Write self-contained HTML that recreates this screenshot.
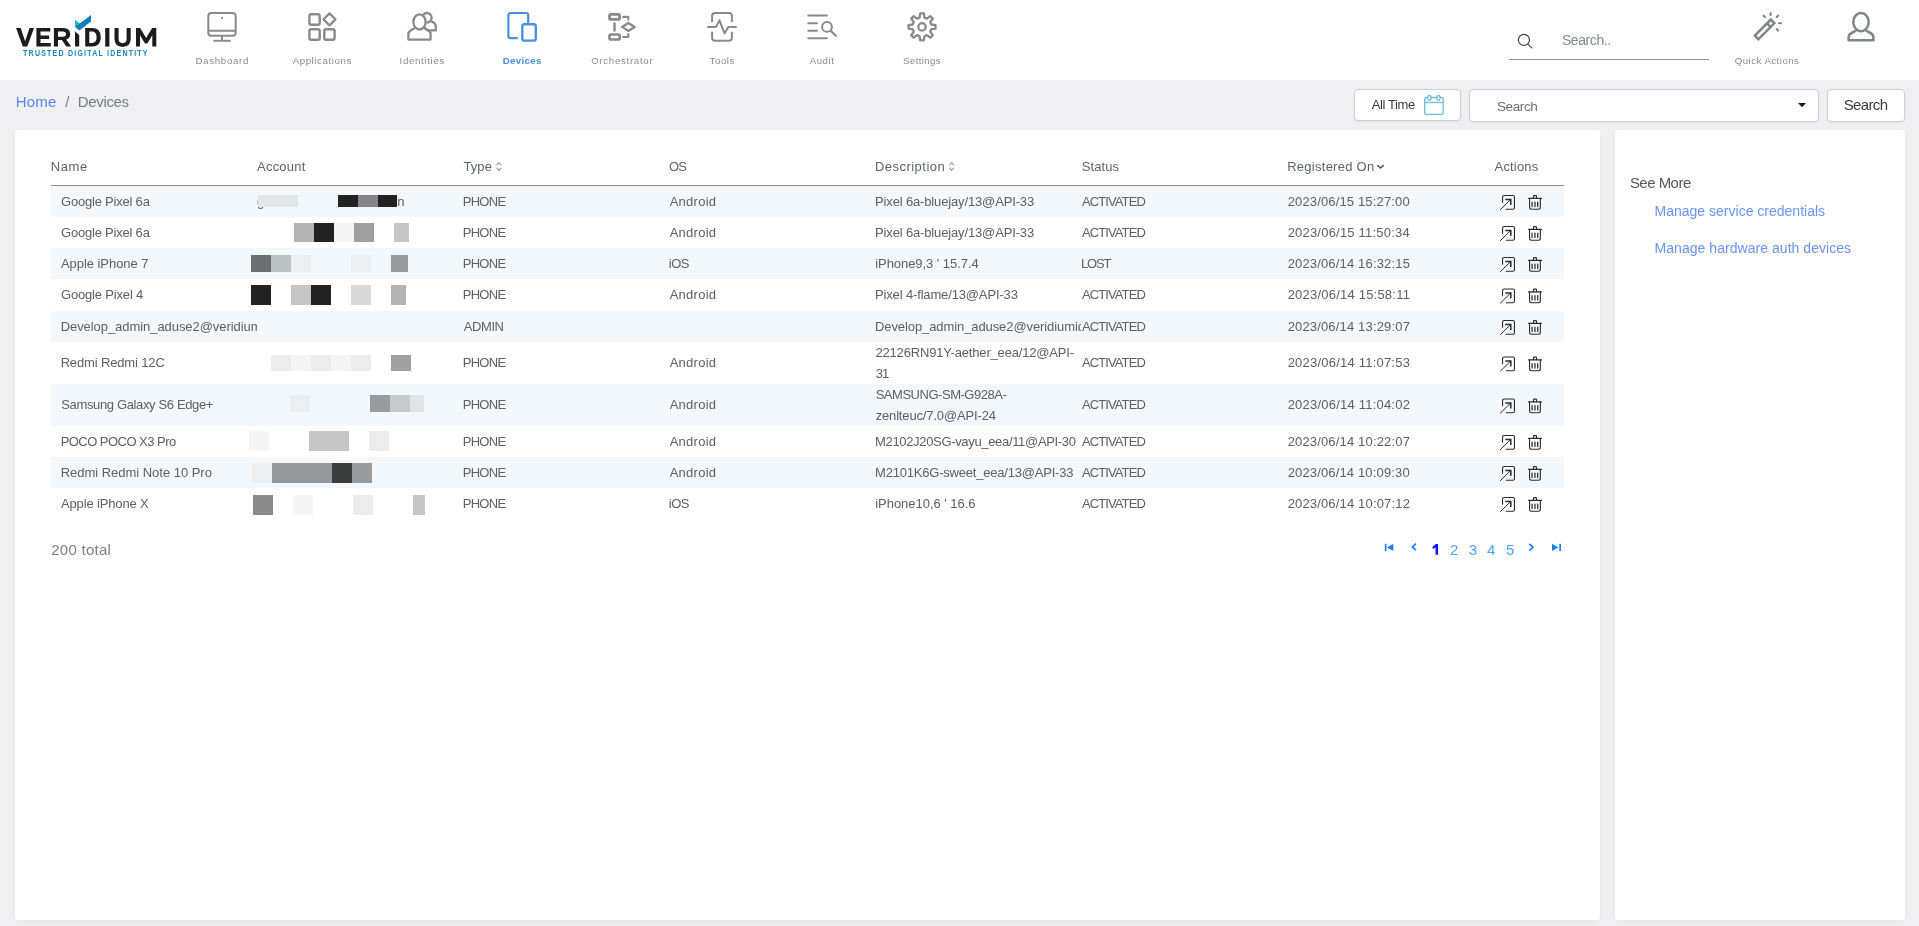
<!DOCTYPE html>
<html lang="en"><head><meta charset="utf-8"><title>Veridium - Devices</title>
<style>
*{box-sizing:border-box}
html,body{margin:0;padding:0}
body{width:1919px;height:926px;overflow:hidden;background:#f0f0f2;font-family:"Liberation Sans", sans-serif;position:relative}
.t{position:absolute;white-space:nowrap;line-height:1;display:block}
.b{position:absolute;display:block;z-index:1}
.a{position:absolute;overflow:visible}
#hdr{display:block;position:absolute;left:0;top:0;width:1919px;height:80px;background:#fff}
.card{display:block;position:absolute;background:#fff;border-radius:3px;box-shadow:0 1px 5px rgba(0,0,0,.05)}
#main{left:15px;top:130px;width:1585px;height:790px}
#side{left:1615px;top:130px;width:290px;height:790px}
.stripe{position:absolute;left:51px;width:1513px;background:#f3f8fd}
#thline{position:absolute;left:51px;top:185px;width:1513px;height:1px;background:#8c8c8c}
.btn{position:absolute;background:#fff;border:1px solid #cfcfd2;border-radius:4px;box-shadow:0 1px 3px rgba(0,0,0,.05)}
#sline{position:absolute;left:1509px;top:58.6px;width:200px;height:1.2px;background:#8a9693}
svg{position:absolute;left:0;top:0}
#ink{position:absolute;left:0;top:0;width:1919px;height:926px;will-change:transform}
</style></head>
<body>
<header id="hdr"></header>
<main class="card" id="main"></main>
<aside class="card" id="side"></aside>
<div class="btn" style="left:1354px;top:89px;width:107px;height:32px"></div>
<div class="btn" style="left:1469px;top:89px;width:350px;height:33px;border-color:#c9d0d8"></div>
<div class="btn" style="left:1827px;top:89px;width:78px;height:33px"></div>
<div id="sline"></div>
<div class="stripe" style="top:186px;height:31px"></div><div class="stripe" style="top:248px;height:31px"></div><div class="stripe" style="top:311px;height:31px"></div><div class="stripe" style="top:384px;height:42px"></div><div class="stripe" style="top:457px;height:31px"></div>
<div id="thline"></div>
<!--ICONS-->
<div id="ink">
<svg id="art" width="1919" height="926" viewBox="0 0 1919 926" style="pointer-events:none">
<defs>
<g id="ext" fill="none" stroke="#2b2b2b" stroke-width="1.1" stroke-linecap="round" stroke-linejoin="round">
<path d="M0.55,7.3 V2.1 Q0.55,0.55 2.1,0.55 H10.9 Q12.45,0.55 12.45,2.1 V12.7 Q12.45,14.25 10.9,14.25 H4.2"/>
<path d="M-1.6,14.6 L8.6,4.6" stroke-width="1"/>
<path d="M3.3,4.45 H8.8 V10" stroke-width="1.5" stroke-linecap="butt" stroke-linejoin="miter"/>
</g>
<g id="trash" fill="none" stroke="#2b2b2b" stroke-width="1.1" stroke-linecap="round" stroke-linejoin="round">
<path d="M0.55,3.4 H13.45"/>
<path d="M5.5,3.2 V1.3 Q5.5,0.65 6.15,0.65 H7.85 Q8.5,0.65 8.5,1.3 V3.2"/>
<path d="M1.55,3.6 V12.3 Q1.55,14.25 3.5,14.25 H10.4 Q12.35,14.25 12.35,12.3 V3.6"/>
<path d="M4.05,7 V11.6 M6.95,7 V11.6 M9.75,7 V11.6" stroke-width="1.25"/>
</g>
</defs>
<use href="#ext" x="1502" y="195.00"/><use href="#trash" x="1528" y="195.00"/><use href="#ext" x="1502" y="226.00"/><use href="#trash" x="1528" y="226.00"/><use href="#ext" x="1502" y="257.00"/><use href="#trash" x="1528" y="257.00"/><use href="#ext" x="1502" y="288.50"/><use href="#trash" x="1528" y="288.50"/><use href="#ext" x="1502" y="320.00"/><use href="#trash" x="1528" y="320.00"/><use href="#ext" x="1502" y="356.50"/><use href="#trash" x="1528" y="356.50"/><use href="#ext" x="1502" y="398.50"/><use href="#trash" x="1528" y="398.50"/><use href="#ext" x="1502" y="435.00"/><use href="#trash" x="1528" y="435.00"/><use href="#ext" x="1502" y="466.00"/><use href="#trash" x="1528" y="466.00"/><use href="#ext" x="1502" y="497.00"/><use href="#trash" x="1528" y="497.00"/>
<!-- logo -->
<g fill="#1c1c1e">
<path d="M16.1,28 H20.7 L25.1,41.3 L29.5,28 H34 L27.3,46.6 H22.8 Z"/>
<path d="M36.4,28 H50.3 V31.6 H40.5 V35.4 H49.1 V38.9 H40.5 V43 H50.7 V46.6 H36.4 Z"/>
<path d="M53.9,28 H63.2 Q70.2,28 70.2,34 Q70.2,38.4 66.2,39.6 L71.2,46.6 H66.3 L61.9,40.1 H58 V46.6 H53.9 Z M58,31.5 V36.7 H62.9 Q66,36.7 66,34.1 Q66,31.5 62.9,31.5 Z" fill-rule="evenodd"/>
<path d="M75,31.6 L79.2,35 V46.6 H75 Z"/>
<path d="M85.2,28 H92 Q100.8,28 100.8,37.3 Q100.8,46.6 92,46.6 H85.2 Z M89.3,31.6 V43 H91.8 Q96.6,43 96.6,37.3 Q96.6,31.6 91.8,31.6 Z" fill-rule="evenodd"/>
<path d="M105.2,28 H109.4 V46.6 H105.2 Z"/>
<path d="M114.5,28 H118.6 V38.6 Q118.6,43.2 122.6,43.2 Q126.6,43.2 126.6,38.6 V28 H130.7 V38.8 Q130.7,46.9 122.6,46.9 Q114.5,46.9 114.5,38.8 Z"/>
<path d="M136,46.6 V28 H140.1 L146.15,38 L152.2,28 H156.3 V46.6 H152.3 V35.3 L147.3,43.4 H145 L140,35.3 V46.6 Z"/>
</g>
<path d="M75,19.6 L80.2,23.8 L75.6,27.2 L75,26.8 Z" fill="#2fb4c8"/>
<path d="M75,26.9 L91,15.1 V21.5 L79.3,30.5 Z" fill="#0b80b9"/>

<text transform="translate(23.1,56) scale(0.84,1)" font-family="Liberation Sans, sans-serif" font-weight="700" font-size="8.4" fill="#1787bd" textLength="148.2" lengthAdjust="spacing">TRUSTED DIGITAL IDENTITY</text>
<!-- nav icons -->
<g fill="none" stroke="#8a8a8a" stroke-width="2" stroke-linecap="round" stroke-linejoin="round">
 <!-- dashboard -->
 <rect x="208.3" y="12.9" width="27.4" height="22.9" rx="3"/>
 <path d="M208.5,30.7 H235.5 M222,36.8 V40 M214.3,40.7 H229.8"/>
 <circle cx="222" cy="18.2" r="0.5" stroke-width="1.2"/>
 <!-- applications -->
 <g stroke-width="2.4">
 <rect x="309.4" y="14.2" width="10.3" height="10.5" rx="1.8"/>
 <rect x="309.4" y="29.2" width="10.3" height="10.5" rx="1.8"/>
 <rect x="324.3" y="29.2" width="10.3" height="10.5" rx="1.8"/>
 <path d="M329.5,13.4 L335.5,19.4 L329.5,25.4 L323.5,19.4 Z" stroke-width="2.2"/>
 </g>
 <!-- identities -->
 <g stroke-width="2.3">
 <path d="M423.9,14.1 A4.75,4.75 0 1 1 427.4,22.5"/>
 <path d="M431.3,21.4 Q435.8,22.8 435.8,27.2 V30.4 H428 Q426.2,29.4 425.3,28.2"/>
 <ellipse cx="419.5" cy="21.9" rx="6.1" ry="7.6"/>
 <path d="M414,28.6 L410.6,30.6 Q408.4,31.9 408.4,34.4 V39.6 H430.6 V34.4 Q430.6,31.9 428.4,30.6 L425,28.6"/>
 </g>
 <!-- orchestrator -->
 <g stroke-width="2.7">
 <rect x="609.5" y="14.3" width="10.1" height="5.1" rx="1.5"/>
 <rect x="609.5" y="34.5" width="10.1" height="5" rx="1.5"/>
 <path d="M614.5,23.4 V30.6" stroke-width="2.5"/>
 <path d="M623.1,16.9 H628.3 V19.7 M628.3,34.1 V37 H623.1" stroke-width="2.1"/>
 <path d="M628.3,23 L634.7,26.9 L628.3,30.9 L622,26.9 Z" stroke-width="2.3"/>
 </g>
 <!-- tools -->
 <path d="M712.1,22 V16 Q712.1,12.9 715.2,12.9 H728.8 Q731.9,12.9 731.9,16 V22 M712.1,31.8 V37.7 Q712.1,40.8 715.2,40.8 H728.8 Q731.9,40.8 731.9,37.7 V31.8" stroke-linecap="butt"/>
 <path d="M708,26.9 H715.8 L719.5,20.4 L724.5,33.4 L728.3,26.9 H736"/>
 <!-- audit -->
 <path d="M808.3,15.6 H826.9 M808.3,23.2 H817 M808.3,30.7 H817 M808.3,38.2 H826.9"/>
 <circle cx="827" cy="26.9" r="4.9"/>
 <path d="M830.7,30.7 L835.8,35.8" stroke-width="2.3"/>
 <!-- settings -->
 <path d="M919.60,17.61 L920.20,13.42 L923.80,13.42 L924.40,17.61 L926.87,18.63 L930.26,16.10 L932.80,18.64 L930.27,22.03 L931.29,24.50 L935.48,25.10 L935.48,28.70 L931.29,29.30 L930.27,31.77 L932.80,35.16 L930.26,37.70 L926.87,35.17 L924.40,36.19 L923.80,40.38 L920.20,40.38 L919.60,36.19 L917.13,35.17 L913.74,37.70 L911.20,35.16 L913.73,31.77 L912.71,29.30 L908.52,28.70 L908.52,25.10 L912.71,24.50 L913.73,22.03 L911.20,18.64 L913.74,16.10 L917.13,18.63 Z" stroke-width="2.3"/>
 <circle cx="922" cy="26.9" r="3.7" stroke-width="2.3"/>
</g>
<!-- devices (active) -->
<g fill="none" stroke="#4a90e2" stroke-width="2.2" stroke-linecap="round" stroke-linejoin="round">
 <path d="M516.8,38.2 H510.6 Q508.4,38.2 508.4,36 V15.2 Q508.4,13 510.6,13 H526 Q528.2,13 528.2,15.2 V23.4"/>
 <rect x="522.3" y="24.2" width="13.5" height="16.4" rx="2.2" stroke-width="2.4"/>
</g>
<!-- header search icon -->
<g fill="none" stroke="#484848" stroke-width="1.2" stroke-linecap="round">
 <circle cx="1523.9" cy="39.9" r="5.55"/>
 <path d="M1527.9,44.1 L1531.7,47.9"/>
</g>
<!-- quick actions wand -->
<g fill="none" stroke="#7f8589" stroke-width="2.5">
 <g transform="translate(1764.6,29.4) rotate(-45)">
  <rect x="-11.3" y="-2.5" width="22.6" height="5"/>
  <path d="M6,-2.5 V2.5"/>
 </g>
 <g stroke-linecap="round" stroke-width="2.1">
 <path d="M1770.6,13 V15"/>
 <path d="M1763.6,15.7 L1765,17.1"/>
 <path d="M1776.7,17.1 L1778.1,15.7"/>
 <path d="M1779,23.2 H1781"/>
 <path d="M1776.7,29.1 L1778.1,30.5"/>
 </g>
</g>
<!-- user -->
<g fill="none" stroke="#7f8589" stroke-width="2.5" stroke-linejoin="round" stroke-linecap="round">
 <ellipse cx="1861" cy="22.1" rx="7.7" ry="9.1"/>
 <path d="M1855.4,30.8 L1851,33.4 Q1848.6,34.9 1848.6,37.6 V40.2 H1873.4 V37.6 Q1873.4,34.9 1871,33.4 L1866.6,30.8"/>
</g>
<!-- calendar -->
<g fill="none" stroke="#6fbbdb" stroke-width="1.3" stroke-linejoin="round">
 <rect x="1424.7" y="97.5" width="18.5" height="16.8" rx="1.3"/>
 <path d="M1424.7,102.5 H1443.2"/>
 <rect x="1427.9" y="95.5" width="3" height="4.8" rx="1.5" fill="#fff"/>
 <rect x="1437" y="95.5" width="3" height="4.8" rx="1.5" fill="#fff"/>
</g>
<!-- select caret -->
<path d="M1798,103 H1806 L1802,107.2 Z" fill="#1e1e1e"/>
<!-- sort icons -->
<g fill="none" stroke="#9c9c9c" stroke-width="1.15" stroke-linecap="round" stroke-linejoin="round">
 <path d="M496.9,164.9 L498.9,162.7 L500.9,164.9 M496.9,168.2 L498.9,170.4 L500.9,168.2"/>
 <path d="M949.6,164.9 L951.6,162.7 L953.6,164.9 M949.6,168.2 L951.6,170.4 L953.6,168.2"/>
</g>
<path d="M1377.8,165.6 L1380.5,168 L1383.2,165.6" fill="none" stroke="#505050" stroke-width="1.5" stroke-linecap="round" stroke-linejoin="round"/>
<!-- pagination icons -->
<path d="M1435.8,544 H1438.1 V554.7 H1435.5 V547.2 L1433.5,548.9 L1432.3,547.3 Z" fill="#1b12f0"/>
<g fill="#1a7dff" stroke="none">
 <rect x="1384.8" y="543.8" width="1.7" height="7.2"/>
 <path d="M1393.3,543.8 V551 L1387,547.4 Z"/>
 <rect x="1559.3" y="543.8" width="1.7" height="7.2"/>
 <path d="M1552,543.8 V551 L1558.3,547.4 Z"/>
</g>
<g fill="none" stroke="#1a7dff" stroke-width="1.7" stroke-linecap="butt" stroke-linejoin="miter">
 <path d="M1415.9,543.6 L1412.4,546.9 L1415.9,550.2"/>
 <path d="M1529.4,543.9 L1532.9,547.3 L1529.4,550.7"/>
</g>
</svg>
<i class="b" style="left:258px;top:195px;width:40px;height:12px;background:#e2e6e9"></i><i class="b" style="left:338px;top:195px;width:20px;height:12px;background:#222"></i><i class="b" style="left:358px;top:195px;width:20px;height:12px;background:#858587"></i><i class="b" style="left:378px;top:195px;width:19px;height:12px;background:#222"></i><i class="b" style="left:294px;top:223px;width:20px;height:19px;background:#b3b3b3"></i><i class="b" style="left:314px;top:223px;width:20px;height:19px;background:#222"></i><i class="b" style="left:334px;top:223px;width:20px;height:19px;background:#f5f5f5"></i><i class="b" style="left:354px;top:223px;width:20px;height:19px;background:#a0a0a0"></i><i class="b" style="left:394px;top:223px;width:15px;height:19px;background:#c6c6c6"></i><i class="b" style="left:251px;top:255px;width:20px;height:17px;background:#6e6f71"></i><i class="b" style="left:271px;top:255px;width:20px;height:17px;background:#bcc1c4"></i><i class="b" style="left:291px;top:255px;width:20px;height:17px;background:#ebeff2"></i><i class="b" style="left:351px;top:255px;width:20px;height:17px;background:#ebeff2"></i><i class="b" style="left:391px;top:255px;width:17px;height:17px;background:#989c9f"></i><i class="b" style="left:251px;top:285px;width:20px;height:20px;background:#222"></i><i class="b" style="left:291px;top:285px;width:20px;height:20px;background:#c6c6c6"></i><i class="b" style="left:311px;top:285px;width:20px;height:20px;background:#222"></i><i class="b" style="left:351px;top:285px;width:20px;height:20px;background:#d9d9d9"></i><i class="b" style="left:391px;top:285px;width:15px;height:20px;background:#b3b3b3"></i><i class="b" style="left:271px;top:355px;width:20px;height:16px;background:#ececec"></i><i class="b" style="left:291px;top:355px;width:20px;height:16px;background:#f5f5f5"></i><i class="b" style="left:311px;top:355px;width:20px;height:16px;background:#ececec"></i><i class="b" style="left:331px;top:355px;width:20px;height:16px;background:#f5f5f5"></i><i class="b" style="left:351px;top:355px;width:20px;height:16px;background:#ececec"></i><i class="b" style="left:391px;top:355px;width:20px;height:16px;background:#a0a0a0"></i><i class="b" style="left:290px;top:395px;width:20px;height:17px;background:#ebeff2"></i><i class="b" style="left:370px;top:395px;width:20px;height:17px;background:#989c9f"></i><i class="b" style="left:390px;top:395px;width:20px;height:17px;background:#c6cacc"></i><i class="b" style="left:410px;top:395px;width:14px;height:17px;background:#e0e4e7"></i><i class="b" style="left:249px;top:431px;width:20px;height:20px;background:#f5f5f5"></i><i class="b" style="left:309px;top:431px;width:40px;height:20px;background:#c6c6c6"></i><i class="b" style="left:369px;top:431px;width:20px;height:20px;background:#ececec"></i><i class="b" style="left:252px;top:463px;width:20px;height:20px;background:#ebeff2"></i><i class="b" style="left:272px;top:463px;width:60px;height:20px;background:#95999c"></i><i class="b" style="left:332px;top:463px;width:20px;height:20px;background:#3c3d3d"></i><i class="b" style="left:352px;top:463px;width:20px;height:20px;background:#989c9f"></i><i class="b" style="left:253px;top:495px;width:20px;height:20px;background:#8a8a8a"></i><i class="b" style="left:293px;top:495px;width:20px;height:20px;background:#f5f5f5"></i><i class="b" style="left:353px;top:495px;width:20px;height:20px;background:#ececec"></i><i class="b" style="left:413px;top:495px;width:12px;height:20px;background:#c6c6c6"></i>
<span class="t" style="left:195.39px;top:56px;font-size:9.7px;color:#8b8b8b;letter-spacing:0.706px;">Dashboard</span><span class="t" style="left:292.65px;top:56px;font-size:9.7px;color:#8b8b8b;letter-spacing:0.582px;">Applications</span><span class="t" style="left:399.59px;top:56px;font-size:9.7px;color:#8b8b8b;letter-spacing:0.660px;">Identities</span><span class="t" style="left:502.74px;top:56px;font-size:9.7px;color:#4a8fe0;letter-spacing:0.321px;font-weight:700;">Devices</span><span class="t" style="left:591.20px;top:56px;font-size:9.7px;color:#8b8b8b;letter-spacing:0.691px;">Orchestrator</span><span class="t" style="left:709.50px;top:56px;font-size:9.7px;color:#8b8b8b;letter-spacing:0.578px;">Tools</span><span class="t" style="left:809.65px;top:56px;font-size:9.7px;color:#8b8b8b;letter-spacing:0.539px;">Audit</span><span class="t" style="left:903.05px;top:56px;font-size:9.7px;color:#8b8b8b;letter-spacing:0.380px;">Settings</span><span class="t" style="left:1734.70px;top:56px;font-size:9.7px;color:#8b8b8b;letter-spacing:0.463px;">Quick Actions</span><span class="t" style="left:1561.91px;top:33px;font-size:14px;color:#858b8f;letter-spacing:-0.405px;">Search..</span><span class="t" style="left:15.78px;top:94px;font-size:15px;color:#5683fb;letter-spacing:0.156px;">Home</span><span class="t" style="left:65.35px;top:94px;font-size:15px;color:#7a7f86;">/</span><span class="t" style="left:77.78px;top:94px;font-size:15px;color:#767b82;letter-spacing:-0.335px;">Devices</span><span class="t" style="left:1371.65px;top:98px;font-size:13px;color:#3a3a3a;letter-spacing:-0.377px;">All Time</span><span class="t" style="left:1496.93px;top:100px;font-size:13.5px;color:#6b7075;letter-spacing:-0.379px;">Search</span><span class="t" style="left:1843.78px;top:97px;font-size:15px;color:#3c3c3c;letter-spacing:-0.663px;">Search</span><span class="t" style="left:1629.88px;top:175px;font-size:15px;color:#585858;letter-spacing:-0.522px;">See More</span><span class="t" style="left:1654.56px;top:204px;font-size:14px;color:#6896f8;letter-spacing:0.004px;">Manage service credentials</span><span class="t" style="left:1654.56px;top:241px;font-size:14px;color:#6896f8;letter-spacing:0.044px;">Manage hardware auth devices</span><span class="t" style="left:50.83px;top:160px;font-size:13px;color:#606468;letter-spacing:0.555px;">Name</span><span class="t" style="left:257.05px;top:160px;font-size:13px;color:#606468;letter-spacing:0.214px;">Account</span><span class="t" style="left:463.45px;top:160px;font-size:13px;color:#606468;letter-spacing:0.082px;">Type</span><span class="t" style="left:669.04px;top:160px;font-size:13px;color:#606468;letter-spacing:-0.927px;">OS</span><span class="t" style="left:875.03px;top:160px;font-size:13px;color:#606468;letter-spacing:0.462px;">Description</span><span class="t" style="left:1081.64px;top:160px;font-size:13px;color:#606468;letter-spacing:0.112px;">Status</span><span class="t" style="left:1287.23px;top:160px;font-size:13px;color:#606468;letter-spacing:0.260px;">Registered On</span><span class="t" style="left:1494.55px;top:160px;font-size:13px;color:#606468;letter-spacing:0.179px;">Actions</span><span class="t" style="left:61.04px;top:195px;font-size:13px;color:#606060;letter-spacing:-0.211px;">Google Pixel 6a</span><span class="t" style="left:462.63px;top:195px;font-size:13px;color:#606060;letter-spacing:-0.667px;">PHONE</span><span class="t" style="left:669.65px;top:195px;font-size:13px;color:#606060;letter-spacing:0.270px;">Android</span><span class="t" style="left:875.03px;top:195px;font-size:13px;color:#606060;letter-spacing:-0.146px;">Pixel 6a-bluejay/13@API-33</span><span class="t" style="left:1082.05px;top:195px;font-size:13px;color:#606060;letter-spacing:-0.909px;">ACTIVATED</span><span class="t" style="left:1287.64px;top:195px;font-size:13px;color:#606060;letter-spacing:0.153px;">2023/06/15 15:27:00</span><span class="t" style="left:61.04px;top:226px;font-size:13px;color:#606060;letter-spacing:-0.211px;">Google Pixel 6a</span><span class="t" style="left:462.63px;top:226px;font-size:13px;color:#606060;letter-spacing:-0.667px;">PHONE</span><span class="t" style="left:669.65px;top:226px;font-size:13px;color:#606060;letter-spacing:0.270px;">Android</span><span class="t" style="left:875.03px;top:226px;font-size:13px;color:#606060;letter-spacing:-0.146px;">Pixel 6a-bluejay/13@API-33</span><span class="t" style="left:1082.05px;top:226px;font-size:13px;color:#606060;letter-spacing:-0.909px;">ACTIVATED</span><span class="t" style="left:1287.64px;top:226px;font-size:13px;color:#606060;letter-spacing:0.207px;">2023/06/15 11:50:34</span><span class="t" style="left:60.95px;top:257px;font-size:13px;color:#606060;letter-spacing:-0.050px;">Apple iPhone 7</span><span class="t" style="left:462.63px;top:257px;font-size:13px;color:#606060;letter-spacing:-0.667px;">PHONE</span><span class="t" style="left:668.84px;top:257px;font-size:13px;color:#606060;letter-spacing:-0.506px;">iOS</span><span class="t" style="left:875.24px;top:257px;font-size:13px;color:#606060;letter-spacing:-0.057px;">iPhone9,3 ' 15.7.4</span><span class="t" style="left:1081.03px;top:257px;font-size:13px;color:#606060;letter-spacing:-1.139px;">LOST</span><span class="t" style="left:1287.64px;top:257px;font-size:13px;color:#606060;letter-spacing:0.164px;">2023/06/14 16:32:15</span><span class="t" style="left:61.04px;top:288px;font-size:13px;color:#606060;letter-spacing:-0.178px;">Google Pixel 4</span><span class="t" style="left:462.63px;top:288px;font-size:13px;color:#606060;letter-spacing:-0.667px;">PHONE</span><span class="t" style="left:669.65px;top:288px;font-size:13px;color:#606060;letter-spacing:0.270px;">Android</span><span class="t" style="left:875.03px;top:288px;font-size:13px;color:#606060;letter-spacing:-0.150px;">Pixel 4-flame/13@API-33</span><span class="t" style="left:1082.05px;top:288px;font-size:13px;color:#606060;letter-spacing:-0.909px;">ACTIVATED</span><span class="t" style="left:1287.64px;top:288px;font-size:13px;color:#606060;letter-spacing:0.218px;">2023/06/14 15:58:11</span><span class="t" style="left:60.63px;top:320px;font-size:13px;color:#606060;letter-spacing:-0.057px;width:196.37px;clip-path:inset(-6px 0 -6px 0);">Develop_admin_aduse2@veridiumid.com</span><span class="t" style="left:463.65px;top:320px;font-size:13px;color:#606060;letter-spacing:-0.382px;">ADMIN</span><span class="t" style="left:875.03px;top:320px;font-size:13px;color:#606060;letter-spacing:-0.092px;width:205.97px;clip-path:inset(-6px 0 -6px 0);">Develop_admin_aduse2@veridiumid.com</span><span class="t" style="left:1082.05px;top:320px;font-size:13px;color:#606060;letter-spacing:-0.909px;">ACTIVATED</span><span class="t" style="left:1287.64px;top:320px;font-size:13px;color:#606060;letter-spacing:0.164px;">2023/06/14 13:29:07</span><span class="t" style="left:60.63px;top:356px;font-size:13px;color:#606060;letter-spacing:-0.145px;">Redmi Redmi 12C</span><span class="t" style="left:462.63px;top:356px;font-size:13px;color:#606060;letter-spacing:-0.667px;">PHONE</span><span class="t" style="left:669.65px;top:356px;font-size:13px;color:#606060;letter-spacing:0.270px;">Android</span><span class="t" style="left:875.44px;top:346px;font-size:13px;color:#606060;letter-spacing:-0.173px;">22126RN91Y-aether_eea/12@API-</span><span class="t" style="left:875.64px;top:367px;font-size:13px;color:#606060;letter-spacing:-0.927px;">31</span><span class="t" style="left:1082.05px;top:356px;font-size:13px;color:#606060;letter-spacing:-0.909px;">ACTIVATED</span><span class="t" style="left:1287.64px;top:356px;font-size:13px;color:#606060;letter-spacing:0.218px;">2023/06/14 11:07:53</span><span class="t" style="left:61.24px;top:398px;font-size:13px;color:#606060;letter-spacing:-0.358px;">Samsung Galaxy S6 Edge+</span><span class="t" style="left:462.63px;top:398px;font-size:13px;color:#606060;letter-spacing:-0.667px;">PHONE</span><span class="t" style="left:669.65px;top:398px;font-size:13px;color:#606060;letter-spacing:0.270px;">Android</span><span class="t" style="left:875.64px;top:388px;font-size:13px;color:#606060;letter-spacing:-0.470px;">SAMSUNG-SM-G928A-</span><span class="t" style="left:875.64px;top:409px;font-size:13px;color:#606060;letter-spacing:-0.151px;">zenlteuc/7.0@API-24</span><span class="t" style="left:1082.05px;top:398px;font-size:13px;color:#606060;letter-spacing:-0.909px;">ACTIVATED</span><span class="t" style="left:1287.64px;top:398px;font-size:13px;color:#606060;letter-spacing:0.218px;">2023/06/14 11:04:02</span><span class="t" style="left:60.63px;top:435px;font-size:13px;color:#606060;letter-spacing:-0.533px;">POCO POCO X3 Pro</span><span class="t" style="left:462.63px;top:435px;font-size:13px;color:#606060;letter-spacing:-0.667px;">PHONE</span><span class="t" style="left:669.65px;top:435px;font-size:13px;color:#606060;letter-spacing:0.270px;">Android</span><span class="t" style="left:875.03px;top:435px;font-size:13px;color:#606060;letter-spacing:-0.332px;">M2102J20SG-vayu_eea/11@API-30</span><span class="t" style="left:1082.05px;top:435px;font-size:13px;color:#606060;letter-spacing:-0.909px;">ACTIVATED</span><span class="t" style="left:1287.64px;top:435px;font-size:13px;color:#606060;letter-spacing:0.164px;">2023/06/14 10:22:07</span><span class="t" style="left:60.63px;top:466px;font-size:13px;color:#606060;letter-spacing:-0.022px;">Redmi Redmi Note 10 Pro</span><span class="t" style="left:462.63px;top:466px;font-size:13px;color:#606060;letter-spacing:-0.667px;">PHONE</span><span class="t" style="left:669.65px;top:466px;font-size:13px;color:#606060;letter-spacing:0.270px;">Android</span><span class="t" style="left:875.03px;top:466px;font-size:13px;color:#606060;letter-spacing:-0.205px;">M2101K6G-sweet_eea/13@API-33</span><span class="t" style="left:1082.05px;top:466px;font-size:13px;color:#606060;letter-spacing:-0.909px;">ACTIVATED</span><span class="t" style="left:1287.64px;top:466px;font-size:13px;color:#606060;letter-spacing:0.153px;">2023/06/14 10:09:30</span><span class="t" style="left:60.95px;top:497px;font-size:13px;color:#606060;letter-spacing:-0.137px;">Apple iPhone X</span><span class="t" style="left:462.63px;top:497px;font-size:13px;color:#606060;letter-spacing:-0.667px;">PHONE</span><span class="t" style="left:668.84px;top:497px;font-size:13px;color:#606060;letter-spacing:-0.506px;">iOS</span><span class="t" style="left:875.24px;top:497px;font-size:13px;color:#606060;letter-spacing:-0.034px;">iPhone10,6 ' 16.6</span><span class="t" style="left:1082.05px;top:497px;font-size:13px;color:#606060;letter-spacing:-0.909px;">ACTIVATED</span><span class="t" style="left:1287.64px;top:497px;font-size:13px;color:#606060;letter-spacing:0.164px;">2023/06/14 10:07:12</span><span class="t" style="left:256.94px;top:195px;font-size:13px;color:#606060;">g</span><span class="t" style="left:397.14px;top:195px;font-size:13px;color:#606060;">n</span><span class="t" style="left:51.25px;top:542px;font-size:15px;color:#808080;letter-spacing:0.268px;">200 total</span><span class="t" style="left:1450.05px;top:542px;font-size:15px;color:#4da0ff;">2</span><span class="t" style="left:1468.68px;top:542px;font-size:15px;color:#4da0ff;">3</span><span class="t" style="left:1487.12px;top:542px;font-size:15px;color:#4da0ff;">4</span><span class="t" style="left:1505.88px;top:542px;font-size:15px;color:#4da0ff;">5</span>
</div>
</body></html>
